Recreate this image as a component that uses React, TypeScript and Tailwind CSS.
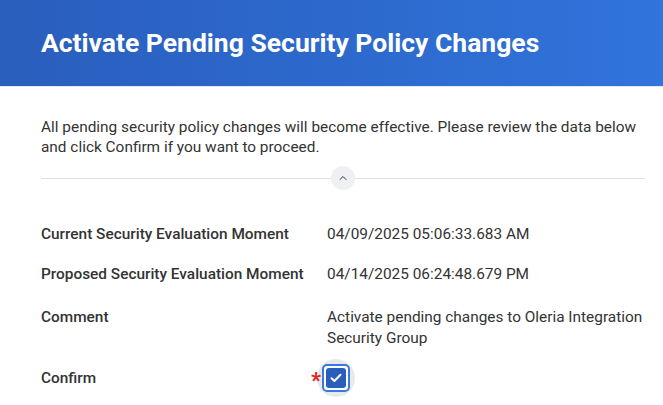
import { ChevronUp } from "lucide-react";

const rows = [
  { label: "Current Security Evaluation Moment", value: "04/09/2025 05:06:33.683 AM" },
  { label: "Proposed Security Evaluation Moment", value: "04/14/2025 06:24:48.679 PM" },
];

export default function App() {
  return (
    <div className="min-h-screen bg-white text-[#333333]" style={{ fontFamily: "Roboto, 'Liberation Sans', sans-serif" }}>
      <div className="h-[87px] flex items-center px-[41px] bg-gradient-to-r from-[#2a5ebd] to-[#3074dc] border-b border-[#e4e8ee]">
        <h1 className="text-[26.5px] font-bold text-white">Activate Pending Security Policy Changes</h1>
      </div>

      <div className="px-[41px] pt-[30px] pr-[18px]">
        <p className="text-[15.4px] leading-[20px] text-[#333333]">
          All pending security policy changes will become effective. Please review the data below and click Confirm if you want to proceed.
        </p>

        <div className="relative mt-[9px] h-[24px] flex items-center">
          <div className="flex-1 h-px bg-[#dfe1e5]" />
          <button className="absolute left-[290px] top-0 w-[24px] h-[24px] rounded-full bg-[#eef0f3] flex items-center justify-center text-[#333]">
            <ChevronUp size={12} strokeWidth={2} />
          </button>
        </div>

        <div className="mt-[34px] flex flex-col text-[15.4px] leading-[21px]">
          {rows.map((r) => (
            <div key={r.label} className="flex mb-[19px]">
              <div className="w-[286px] shrink-0 font-medium">{r.label}</div>
              <div className="flex-1">{r.value}</div>
            </div>
          ))}
          <div className="flex mt-[3px]">
            <div className="w-[286px] shrink-0 font-medium">Comment</div>
            <div className="flex-1">Activate pending changes to Oleria Integration Security Group</div>
          </div>
          <div className="flex items-center mt-[10px]">
            <div className="w-[270px] shrink-0 font-medium">Confirm</div>
            <span className="relative z-10 w-[9px] text-[#e0261a] text-[22px] font-bold leading-none pt-[6px]">*</span>
            <div className="ml-[-3.5px] w-[38px] h-[38px] rounded-full bg-[#e6e9ed] flex items-center justify-center">
              <div className="w-[28px] h-[28px] rounded-[5px] border-2 border-[#3a78dc] bg-white flex items-center justify-center">
                <div className="w-[20px] h-[20px] rounded-[3px] bg-[#2a5ebd] flex items-center justify-center">
                  <svg width="12" height="10" viewBox="0 0 12 10" fill="none">
                    <path d="M1.5 5.2 L4.4 8 L10.5 1.8" stroke="white" strokeWidth="2" strokeLinecap="round" strokeLinejoin="round" />
                  </svg>
                </div>
              </div>
            </div>
          </div>
        </div>
      </div>
    </div>
  );
}
